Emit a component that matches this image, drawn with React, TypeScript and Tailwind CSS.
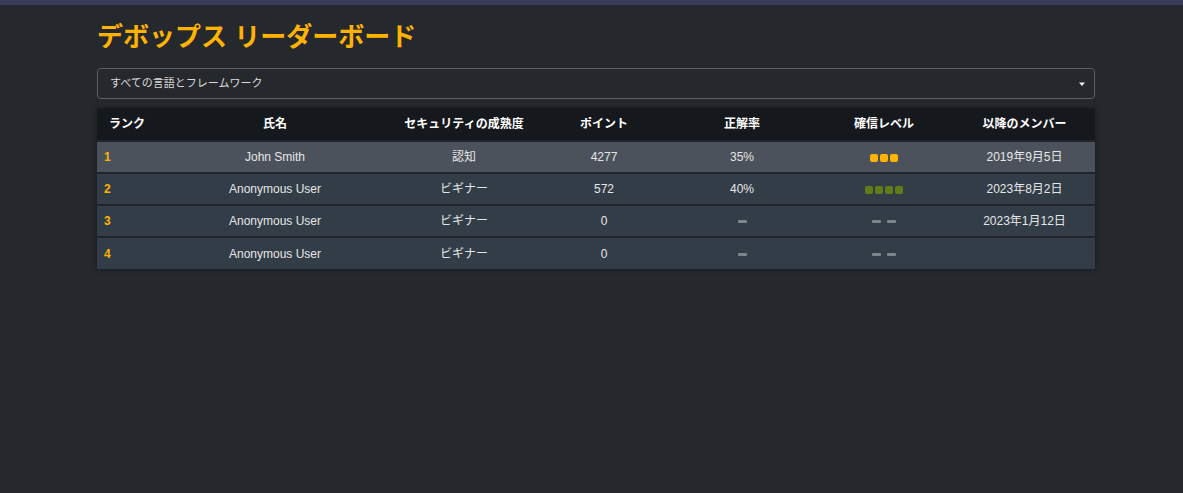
import { ChevronDown } from "lucide-react";

type Row = {
  rank: number;
  name: string;
  maturity: string;
  points: number;
  accuracy: string | null;
  confidence: { count: number; color: string } | null;
  since: string;
};

const rows: Row[] = [
  {
    rank: 1,
    name: "John Smith",
    maturity: "認知",
    points: 4277,
    accuracy: "35%",
    confidence: { count: 3, color: "bg-[#ffb300]" },
    since: "2019年9月5日",
  },
  {
    rank: 2,
    name: "Anonymous User",
    maturity: "ビギナー",
    points: 572,
    accuracy: "40%",
    confidence: { count: 4, color: "bg-[#5f7d17]" },
    since: "2023年8月2日",
  },
  {
    rank: 3,
    name: "Anonymous User",
    maturity: "ビギナー",
    points: 0,
    accuracy: null,
    confidence: null,
    since: "2023年1月12日",
  },
  {
    rank: 4,
    name: "Anonymous User",
    maturity: "ビギナー",
    points: 0,
    accuracy: null,
    confidence: null,
    since: "",
  },
];

const Dash = () => <span className="inline-block w-[9px] h-[3px] bg-[#7f858c] rounded-[1px] align-middle" />;

const App = () => {
  return (
    <div
      className="min-h-[493px] bg-[#25282d] text-[#e6e6e6]"
      style={{ fontFamily: '"Liberation Sans", "Noto Sans CJK JP", sans-serif' }}
    >
      <div className="h-[5px] bg-[#3a3d58]" />
      <div className="w-[998px] ml-[97px] pt-[14px]">
        <h1 className="text-[26px] leading-[36px] font-bold text-[#ffb300]">デボップス リーダーボード</h1>

        {/* filter */}
        <div className="mt-[13px] h-[31px] border border-[#5b5e63] rounded-[4px] flex items-center justify-between pl-[12px] pr-[8px] text-[11px] text-[#dcdcdc]">
          <span>すべての言語とフレームワーク</span>
          <svg width="8" height="6" viewBox="0 0 8 6" className="mt-[1px]">
            <path d="M1 1.5h6L4 5z" fill="#f2f2f2" />
          </svg>
        </div>

        <div className="mt-[9px] shadow-[0_0_6px_rgba(0,0,0,0.35)]">
          <table className="w-full border-collapse text-[12px] table-fixed">
            <colgroup>
              <col className="w-[63px]" />
              <col className="w-[230px]" />
              <col className="w-[148px]" />
              <col className="w-[132px]" />
              <col className="w-[144px]" />
              <col className="w-[140px]" />
              <col className="w-[141px]" />
            </colgroup>
            <thead>
              <tr className="bg-[#15181c] h-[33px] text-white font-bold">
                <th className="text-left pl-[12px] font-bold">ランク</th>
                <th className="font-bold">氏名</th>
                <th className="font-bold">セキュリティの成熟度</th>
                <th className="font-bold">ポイント</th>
                <th className="font-bold">正解率</th>
                <th className="font-bold">確信レベル</th>
                <th className="font-bold">以降のメンバー</th>
              </tr>
            </thead>
            <tbody>
              {rows.map((r) => (
                <tr
                  key={r.rank}
                  className={`h-[32px] border-t-2 border-[#22262c] text-center ${
                    r.rank === 1 ? "bg-[#4b525b]" : "bg-[#333d48]"
                  }`}
                >
                  <td className="text-left pl-[7px] font-bold text-[#ffb300]">{r.rank}</td>
                  <td>{r.name}</td>
                  <td>{r.maturity}</td>
                  <td>{r.points}</td>
                  <td>{r.accuracy ?? <Dash />}</td>
                  <td>
                    {r.confidence ? (
                      <span className="inline-flex gap-[2px] align-middle">
                        {Array.from({ length: r.confidence.count }).map((_, i) => (
                          <span key={i} className={`w-[8px] h-[8px] rounded-[2px] ${r.confidence!.color}`} />
                        ))}
                      </span>
                    ) : (
                      <span className="inline-flex gap-[6px] align-middle">
                        <Dash />
                        <Dash />
                      </span>
                    )}
                  </td>
                  <td>{r.since}</td>
                </tr>
              ))}
            </tbody>
          </table>
        </div>
      </div>
    </div>
  );
};

export default App;
